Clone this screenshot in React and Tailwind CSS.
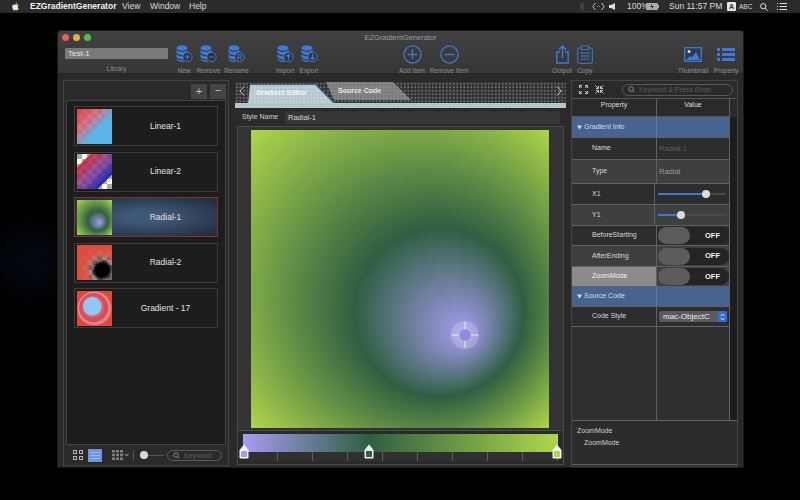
import { FaApple } from "react-icons/fa";

const font = "font-['Liberation_Sans',Arial,sans-serif]";
const blue = "#3f7ad9";

function Db({ badge }) {
  return (
    <svg width="17" height="18" viewBox="0 0 17 18">
      <g fill={blue}>
        <ellipse cx="6" cy="3" rx="5.5" ry="2.8" />
        <path d="M.5 4.6c1 1.6 3 2.3 5.5 2.3s4.500-.7 5.500-2.300v3c-1 1.600-3 2.300-5.500 2.300S1.500 9.200.5 7.600z" />
        <path d="M.5 9c1 1.600 3 2.300 5.500 2.300.5 0 1 0 1.500-.1v3c-.5.100-1 .100-1.500.100-2.500 0-4.500-.7-5.500-2.300z" />
        <path d="M.5 13.200c1 1.600 3 2.300 5.500 2.300.5 0 1 0 1.500-.1v1.300c-.5.100-1 .200-1.500.200-2.500 0-4.500-.8-5.500-2.300z" />
      </g>
      <circle cx="11.500" cy="12" r="4.700" fill="#333" stroke={blue} strokeWidth="1" />
      {badge === "plus" && <path d="M9 12h5M11.500 9.500v5" stroke={blue} strokeWidth="1" />}
      {badge === "minus" && <path d="M9 12h5" stroke={blue} strokeWidth="1" />}
      {badge === "r" && <path d="M10 15V9.500h2a1.500 1.500 0 0 1 0 3h-2M12 12.500l1.500 2.500" stroke={blue} strokeWidth="1" fill="none" />}
      {badge === "up" && <path d="M11.500 15V9.500M9.500 11.500l2-2 2 2" stroke={blue} strokeWidth="1.200" fill="none" />}
      {badge === "down" && <path d="M11.500 9v5.500M9.500 12.500l2 2 2-2" stroke={blue} strokeWidth="1.200" fill="none" />}
    </svg>
  );
}

function Circle({ plus }) {
  return (
    <svg width="19" height="19" viewBox="0 0 19 19" fill="none" stroke={blue} strokeWidth="1.300">
      <circle cx="9.500" cy="9.500" r="8.600" />
      <path d="M4.500 9.500h10" />
      {plus && <path d="M9.500 4.500v10" />}
    </svg>
  );
}

function OutputIcon() {
  return (
    <svg width="13" height="19" viewBox="0 0 13 19" fill="none" stroke={blue} strokeWidth="1.400">
      <path d="M4 7H.8v11h11.400V7H9" />
      <path d="M6.500 13V1M2.800 4.700 6.500 1l3.700 3.700" />
    </svg>
  );
}

function CopyIcon() {
  return (
    <svg width="16" height="19" viewBox="0 0 16 19" fill="none" stroke={blue} strokeWidth="1">
      <rect x=".7" y="3" width="14.600" height="15.300" rx="1.500" />
      <rect x="4.500" y="1" width="7" height="3.500" fill="#333" />
      <path d="M3.500 8h9M3.500 11h9M3.500 14h9" />
    </svg>
  );
}

function ThumbIcon() {
  return (
    <svg width="18" height="15" viewBox="0 0 18 15">
      <rect x=".7" y=".7" width="16.600" height="13.600" fill="#2d3a52" stroke={blue} strokeWidth="1.300" />
      <circle cx="5" cy="4.500" r="1.500" fill="#dfe8f7" />
      <path d="M2 13l4-4 2 1.500L12 5l4 8z" fill={blue} />
    </svg>
  );
}

function PropIcon() {
  return (
    <svg width="18" height="15" viewBox="0 0 18 15" fill={blue}>
      <rect x="0" y="1" width="3" height="3" />
      <rect x="5" y="1" width="13" height="3" />
      <rect x="0" y="6" width="3" height="3" />
      <rect x="5" y="6" width="13" height="3" />
      <rect x="0" y="11" width="3" height="3" />
      <rect x="5" y="11" width="13" height="3" />
    </svg>
  );
}

function Tool({ label, width, children }) {
  return (
    <div className={`flex flex-col items-center shrink-0 ${width}`}>
      <div className="h-[20px] flex items-center justify-center">{children}</div>
      <span className="mt-[3px] text-[6.500px] leading-[8px] text-[#8d8d8d] whitespace-nowrap">{label}</span>
    </div>
  );
}

function MenuBar() {
  return (
    <div className="h-[13px] bg-[#2b2b2b] flex items-center text-[8.500px] text-[#dcdcdc] shrink-0">
      <FaApple className="ml-[11px] text-[9px] text-[#e8e8e8]" />
      <span className="ml-[10px] font-bold text-[#f0f0f0] w-[92px]">EZGradientGenerator</span>
      <span className="w-[28px]">View</span>
      <span className="w-[39px]">Window</span>
      <span className="w-[20px]">Help</span>
      <svg className="ml-[370px]" width="6" height="9" viewBox="0 0 6 9" fill="none" stroke="#555" strokeWidth=".8">
        <path d="M.5 2.500l5 4L3 8.500V.5l2.500 2-5 4" />
      </svg>
      <svg className="ml-[7px]" width="13" height="9" viewBox="0 0 13 9" fill="none" stroke="#ccc" strokeWidth=".9">
        <path d="M3.500 1 .8 4.500 3.500 8M9.500 1l2.700 3.500L9.500 8" />
        <path d="M5 4.500h.8M7 4.500h.8" />
      </svg>
      <svg className="ml-[4px]" width="6" height="7" viewBox="0 0 6 7" fill="#ddd">
        <path d="M0 2h2l4-2v7L2 5H0z" />
      </svg>
      <span className="ml-[12px] w-[19px]">100%</span>
      <svg width="13" height="7" viewBox="0 0 13 7">
        <rect width="12" height="7" rx="1" fill="#aaa" />
        <rect x="12" y="2" width="1" height="3" fill="#aaa" />
        <path d="M6 1 4 4h2v2l2-3H6z" fill="#333" />
      </svg>
      <span className="ml-[10px] w-[58px]">Sun 11:57 PM</span>
      <span className="w-[9px] h-[9px] bg-[#e4e4e4] text-[#333] text-[7px] font-bold leading-[9px] text-center rounded-[1px]">A</span>
      <span className="ml-[3px] text-[6.500px] w-[21px]">ABC</span>
      <svg width="8" height="8" viewBox="0 0 8 8" fill="none" stroke="#ddd" strokeWidth="1">
        <circle cx="3.200" cy="3.200" r="2.600" />
        <path d="M5 5l2.700 2.700" />
      </svg>
      <svg className="ml-[9px]" width="10" height="7" viewBox="0 0 10 7" stroke="#ddd" strokeWidth="1">
        <path d="M0 .5h1M2.500 .5H10M0 3.500h1M2.500 3.500H10M0 6.500h1M2.500 6.500H10" />
      </svg>
    </div>
  );
}

function Toolbar() {
  return (
    <div className="h-[43px] shrink-0 rounded-t-[3px] bg-gradient-to-b from-[#414141] to-[#363636] border-b border-[#262626]">
      <div className="h-[13px] relative flex items-center justify-center">
        <div className="absolute left-[4px] top-[3px] flex gap-[4px]">
          <span className="w-[7px] h-[7px] rounded-full bg-[#ec5f57]" />
          <span className="w-[7px] h-[7px] rounded-full bg-[#e3b23e]" />
          <span className="w-[7px] h-[7px] rounded-full bg-[#5dbb4e]" />
        </div>
        <span className="text-[7.500px] text-[#9c9c9c]">EZGradientGenerator</span>
      </div>
      <div className="flex">
        <div className="ml-[7px] w-[103px] flex flex-col">
          <div className="mt-[4px] h-[11px] bg-[#7a7a7a] rounded-[1px] px-[3px] text-[8px] leading-[11px] text-[#e4e4e4]">Test-1</div>
          <span className="mt-[6px] text-center text-[6.500px] leading-[8px] text-[#8d8d8d]">Library</span>
        </div>
        <Tool label="New" width="ml-[4px] w-[24px]"><Db badge="plus" /></Tool>
        <Tool label="Remove" width="w-[25px]"><Db badge="minus" /></Tool>
        <Tool label="Rename" width="w-[31px]"><Db badge="r" /></Tool>
        <Tool label="Import" width="ml-[21px] w-[24px]"><Db badge="up" /></Tool>
        <Tool label="Export" width="w-[24px]"><Db badge="down" /></Tool>
        <Tool label="Add Item" width="ml-[73px] w-[36px]"><Circle plus /></Tool>
        <Tool label="Remove Item" width="w-[38px]"><Circle /></Tool>
        <Tool label="Output" width="ml-[82px] w-[24px]"><OutputIcon /></Tool>
        <Tool label="Copy" width="w-[22px]"><CopyIcon /></Tool>
        <Tool label="Thumbnail" width="ml-[79px] w-[36px]"><ThumbIcon /></Tool>
        <Tool label="Property" width="w-[30px]"><PropIcon /></Tool>
      </div>
    </div>
  );
}

// checkerboard + gradient overlays for the list thumbnails
function Thumb({ id }) {
  const checks = [];
  for (let y = 0; y < 7; y++) {
    for (let x = 0; x < 7; x++) {
      if ((x + y) % 2 === 0) checks.push(<rect key={x + "-" + y} x={x * 5} y={y * 5} width="5" height="5" fill="#a8a8a8" />);
    }
  }
  return (
    <svg width="35" height="35" viewBox="0 0 35 35" className="shrink-0">
      <defs>
        <linearGradient id="th1" x1="0" y1="0" x2="1" y2="1">
          <stop offset="0.05" stopColor="#e0403a" stopOpacity="0.95" />
          <stop offset="0.35" stopColor="#d0607a" stopOpacity="0.82" />
          <stop offset="0.6" stopColor="#56b6ea" stopOpacity="1" />
          <stop offset="1" stopColor="#56b6ea" />
        </linearGradient>
        <linearGradient id="th2" x1="0" y1="0" x2="1" y2="1">
          <stop offset="0.19" stopColor="#ffffff" stopOpacity="0" />
          <stop offset="0.2" stopColor="#cf3030" stopOpacity="0.95" />
          <stop offset="0.5" stopColor="#7d2f90" stopOpacity="0.8" />
          <stop offset="0.79" stopColor="#1a2cb0" />
          <stop offset="0.8" stopColor="#ffffff" stopOpacity="0" />
        </linearGradient>
        <radialGradient id="th3" cx="0.5" cy="0.5" r="0.7" fx="0.65" fy="0.66">
          <stop offset="0" stopColor="#a79cf2" />
          <stop offset="0.4" stopColor="#2f5f42" />
          <stop offset="1" stopColor="#aed64a" />
        </radialGradient>
        <radialGradient id="th4" cx="0.72" cy="0.72" r="0.75">
          <stop offset="0.25" stopColor="#000" />
          <stop offset="0.3" stopColor="#000" stopOpacity="0.85" />
          <stop offset="0.42" stopColor="#552a25" stopOpacity="0.55" />
          <stop offset="0.6" stopColor="#d9483a" stopOpacity="0.85" />
          <stop offset="0.85" stopColor="#dc4a3a" stopOpacity="0.97" />
        </radialGradient>
        <radialGradient id="th5" cx="0.5" cy="0.5" r="0.5" fx="0.37" fy="0.37">
          <stop offset="0.5" stopColor="#8fc8f5" />
          <stop offset="0.53" stopColor="#c08098" />
          <stop offset="0.65" stopColor="#e0485a" />
          <stop offset="0.8" stopColor="#e0485a" />
          <stop offset="0.86" stopColor="#e58a8a" />
          <stop offset="0.92" stopColor="#e58a8a" />
          <stop offset="1" stopColor="#e0483e" />
        </radialGradient>
      </defs>
      <rect width="35" height="35" fill="#fff" />
      {checks}
      <rect width="35" height="35" fill={`url(#th${id})`} />
    </svg>
  );
}

const items = [
  { name: "Linear-1", thumb: 1 },
  { name: "Linear-2", thumb: 2 },
  { name: "Radial-1", thumb: 3, active: true },
  { name: "Radial-2", thumb: 4 },
  { name: "Gradient - 17", thumb: 5 },
];

function LeftPanel() {
  return (
    <div className="ml-[5px] w-[166px] h-[386px] border border-[#444] px-[2px] flex flex-col shrink-0">
      <div className="h-[19px] pt-[3px] flex justify-end gap-[3px] shrink-0">
        <div className="w-[16px] h-[15px] bg-[#444] text-[#c4c4c4] text-[11px] leading-[14px] text-center">+</div>
        <div className="w-[16px] h-[15px] bg-[#444] text-[#c4c4c4] text-[11px] leading-[13px] text-center">−</div>
      </div>
      <div className="h-[345px] bg-[#1d1d1d] border border-[#444] px-[7px] pt-[5px] flex flex-col gap-[5.500px] shrink-0">
        {items.map((it) => (
          <div
            key={it.name}
            className={
              "h-[40px] shrink-0 flex items-center px-[2px] border " +
              (it.active
                ? "border-[#8a302a] bg-[radial-gradient(ellipse_at_center,#3f5878_20%,#1f2836_100%)]"
                : "border-[#3b3b3b]")
            }
          >
            <Thumb id={it.thumb} />
            <span className="flex-1 pl-[4px] text-center text-[8.500px] text-[#e2e2e2]">{it.name}</span>
          </div>
        ))}
      </div>
      <div className="flex-1 flex items-center pl-[7px]">
        <svg width="10" height="10" viewBox="0 0 10 10" fill="none" stroke="#b5b5b5" strokeWidth="1">
          <rect x=".5" y=".5" width="3" height="3" />
          <rect x="6.500" y=".5" width="3" height="3" />
          <rect x=".5" y="6.500" width="3" height="3" />
          <rect x="6.500" y="6.500" width="3" height="3" />
        </svg>
        <div className="ml-[5px] w-[14px] h-[13px] bg-[#6f97de] flex flex-col justify-center gap-[2px] px-[2px]">
          <span className="h-px bg-[#9db9ea]" />
          <span className="h-px bg-[#9db9ea]" />
          <span className="h-px bg-[#9db9ea]" />
        </div>
        <svg className="ml-[10px]" width="11" height="10" viewBox="0 0 11 10" fill="#7f7f7f">
          <rect width="3" height="2.500" />
          <rect x="4" width="3" height="2.500" />
          <rect x="8" width="3" height="2.500" />
          <rect y="3.700" width="3" height="2.500" />
          <rect x="4" y="3.700" width="3" height="2.500" />
          <rect x="8" y="3.700" width="3" height="2.500" />
          <rect y="7.500" width="3" height="2.500" />
          <rect x="4" y="7.500" width="3" height="2.500" />
          <rect x="8" y="7.500" width="3" height="2.500" />
        </svg>
        <svg className="ml-[1px]" width="5" height="4" viewBox="0 0 5 4" fill="none" stroke="#bbb" strokeWidth="1">
          <path d="M.5 .8l2 2 2-2" />
        </svg>
        <span className="ml-[4px] w-px h-[11px] bg-[#555]" />
        <div className="ml-[6px] w-[8px] h-[8px] rounded-full bg-[#d8d8d8] shrink-0" />
        <span className="w-[16px] h-px bg-[#555]" />
        <div className="ml-[3px] w-[55px] h-[11px] rounded-full border border-[#5a5a5a] flex items-center pl-[5px] shrink-0">
          <svg width="9" height="7" viewBox="0 0 9 7" fill="none" stroke="#9a9a9a" strokeWidth=".8">
            <circle cx="3" cy="3" r="2.300" />
            <path d="M4.800 4.800 6.500 6.500" />
          </svg>
          <span className="ml-[2px] text-[7px] leading-none text-[#5f5f5f]">Keyword</span>
        </div>
      </div>
    </div>
  );
}

const dots = "bg-[radial-gradient(#6e6e6e_1px,transparent_1px)] bg-[length:3.500px_3.500px]";

function Chevron({ d, className }) {
  return (
    <svg className={"absolute top-[4px] " + className} width="6" height="10" viewBox="0 0 6 10" fill="none" stroke="#c2c2c2" strokeWidth="1">
      <path d={d} />
    </svg>
  );
}

function Tabs() {
  return (
    <div className={`mt-[2px] h-[26px] shrink-0 bg-[#333] ${dots} relative flex flex-col justify-end`}>
      <div className="h-[21px] relative flex items-end">
        <Chevron d="M5 .5 1 5l4 4.500" className="left-[4px]" />
        <Chevron d="M1 .5 5 5 1 9.500" className="right-[4px]" />
        <div className="ml-[91px] mb-[3px] w-[85px] h-[18px] bg-[#7d7d7d] bg-[radial-gradient(#8d8d8d_1px,transparent_1px)] bg-[length:3.500px_3.500px] [clip-path:polygon(0_0,67px_0,85px_100%,8px_100%)] flex items-center pl-[12px] text-[7px] font-bold text-[#e8e8e8]">
          Source Code
        </div>
      </div>
      <div className="absolute left-[13px] top-[2px] w-[87px] h-[19px] bg-[#4c6390] [clip-path:polygon(2px_0,68px_0,87px_100%,0_100%)]">
        <div className="w-[86px] h-[19px] bg-[#bed0d5] bg-[radial-gradient(#a9bdc4_1px,transparent_1px)] bg-[length:3.500px_3.500px] [clip-path:polygon(2px_1px,67px_1px,85px_100%,0_100%)] flex items-center pl-[8px] text-[7px] font-bold text-[#f5f8f8]">
          Gradient Editor
        </div>
      </div>
      <div className="h-[5px] bg-[#b8cbcf] bg-[radial-gradient(#a6bac0_1px,transparent_1px)] bg-[length:3.500px_3.500px] shrink-0" />
    </div>
  );
}

function Canvas() {
  return (
    <div className="mx-[2px] h-[305px] border border-[#4a4a4a] bg-[#333] flex pl-[13px] pt-[3px] shrink-0">
      <div className="relative w-[298px] h-[298px]">
        <svg width="298" height="298" viewBox="0 0 298 298">
          <defs>
            <radialGradient id="main" gradientUnits="userSpaceOnUse" cx="149" cy="149" r="211" fx="214" fy="205">
              <stop offset="0" stopColor="#a79cf2" />
              <stop offset="0.4" stopColor="#2f5f42" />
              <stop offset="1" stopColor="#afd74a" />
            </radialGradient>
          </defs>
          <rect width="298" height="298" fill="url(#main)" />
        </svg>
        {/* focus handle */}
        <svg className="absolute left-[200px] top-[191px]" width="28" height="28" viewBox="0 0 28 28">
          <circle cx="14" cy="14" r="14" fill="#fff" fillOpacity=".2" />
          <circle cx="14" cy="14" r="5.500" fill="#9388e0" />
          <path d="M14 1v7M14 20v7M1 14h7M20 14h7" stroke="#eeeeee" strokeWidth="1" />
        </svg>
      </div>
    </div>
  );
}

function Handle({ color, className }) {
  return (
    <svg className={"absolute top-[13px] " + className} width="10" height="15" viewBox="0 0 10 15">
      <path d="M5 .5 9.500 6v7.500a1 1 0 0 1-1 1h-7a1 1 0 0 1-1-1V6z" fill="#f2f2f2" />
      <rect x="2" y="7" width="6" height="6" fill={color} />
    </svg>
  );
}

function GradientStrip() {
  return (
    <div className="mx-[2px] h-[34px] border border-t-0 border-[#4a4a4a] px-[5px] pt-[3px] relative shrink-0">
      <div className="h-[18px] bg-[linear-gradient(to_right,#a79cf2_0%,#2f5f42_40%,#afd74a_100%)]" />
      <div className="h-[9px] bg-[repeating-linear-gradient(to_right,#303030_0,#303030_34px,#5c5c5c_34px,#5c5c5c_35px)] bg-[#303030]" />
      <Handle color="#a79cf2" className="left-[1px]" />
      <Handle color="#2f5f42" className="left-[126px]" />
      <Handle color="#afd74a" className="left-[314px]" />
    </div>
  );
}

function CenterPanel() {
  return (
    <div className="ml-[6px] w-[331px] flex flex-col shrink-0">
      <Tabs />
      <div className="h-[18px] flex items-center shrink-0">
        <span className="ml-[7px] w-[43px] text-[7px] text-[#cfcfcf]">Style Name</span>
        <div className="w-[275px] h-[13px] bg-[#363636] pl-[3px] text-[7.500px] leading-[13px] text-[#d5d5d5]">Radial-1</div>
      </div>
      <Canvas />
      <GradientStrip />
    </div>
  );
}

function Slider({ pct }) {
  return (
    <div className="mx-[3px] w-[68px] h-[2px] bg-[#4a4a4a] relative">
      <div className="h-[2px] bg-[#3f78d0]" style={{ width: pct + "%" }} />
      <div className="absolute top-[-3px] w-[8px] h-[8px] rounded-full bg-[#dcdcdc] -translate-x-1/2" style={{ left: pct + "%" }} />
    </div>
  );
}

function Switch() {
  return (
    <div className="ml-[1px] w-[71px] h-[17px] rounded-full bg-[#242424] flex items-center">
      <div className="w-[32px] h-[17px] rounded-full bg-[#5c5c5c]" />
      <span className="ml-[15px] text-[7.500px] font-bold text-[#f0f0f0]">OFF</span>
    </div>
  );
}

function Row({ h, label, bg = "bg-[#2d2d2d]", labelBg = "", children }) {
  return (
    <div className={`${h} ${bg} flex border-b border-[#616161] shrink-0`}>
      <div className={`w-[84px] pl-[20px] flex items-center text-[7px] text-[#d8d8d8] ${labelBg}`}>{label}</div>
      <div className="w-px bg-[#616161]" />
      <div className="flex-1 flex items-center">{children}</div>
    </div>
  );
}

function Section({ h, label }) {
  return (
    <div className={`${h} bg-[#46648f] flex border-b border-[#616161] shrink-0`}>
      <div className="w-[84px] pl-[5px] flex items-center text-[7px] text-[#d5deea]">
        <svg className="mr-[2px]" width="5" height="5" viewBox="0 0 5 5" fill="#d5deea">
          <path d="M0 .5h5L2.500 4.500z" />
        </svg>
        {label}
      </div>
      <div className="w-px bg-[#5f7aa1]" />
    </div>
  );
}

function RightPanel() {
  const lighter = "bg-[#3f3f3f]";
  return (
    <div className="ml-[5px] w-[167px] h-[387px] border border-[#444] flex flex-col shrink-0">
      <div className="h-[17px] flex items-center shrink-0">
        <svg className="ml-[7px]" width="9" height="9" viewBox="0 0 9 9" fill="none" stroke="#c4c4c4" strokeWidth="1">
          <path d="M.5 3V.5H3M6 .5h2.500V3M.5 6v2.500H3M6 8.500h2.500V6M1 1l2 2M8 1 6 3M1 8l2-2M8 8 6 6" />
        </svg>
        <svg className="ml-[7px]" width="9" height="9" viewBox="0 0 9 9" fill="none" stroke="#c4c4c4" strokeWidth="1">
          <path d="M3.500 1v2.500H1M5.500 1v2.500H8M3.500 8V5.500H1M5.500 8V5.500H8M.5 .5l3 3M8.500 .5l-3 3M.5 8.500l3-3M8.500 8.500l-3-3" />
        </svg>
        <div className="ml-[18px] w-[111px] h-[12px] rounded-full border border-[#585858] flex items-center pl-[5px]">
          <svg width="9" height="7" viewBox="0 0 9 7" fill="none" stroke="#a0a0a0" strokeWidth=".8">
            <circle cx="3" cy="3" r="2.300" />
            <path d="M4.800 4.800 6.500 6.500" />
          </svg>
          <span className="ml-[2px] text-[7px] leading-none text-[#5c5c5c]">Keyword &amp; Press Enter</span>
        </div>
      </div>
      <div className="flex-1 flex min-h-0">
        <div className="w-[157px] flex flex-col bg-[#2f2f2f]">
          <div className="h-[19px] flex border-t border-b border-[#555] bg-[#2a2a2a] text-[7px] text-[#dedede] shrink-0">
            <div className="w-[84px] text-center leading-[12px]">Property</div>
            <div className="w-px bg-[#616161]" />
            <div className="flex-1 text-center leading-[12px]">Value</div>
          </div>
          <Section h="h-[21px]" label="Gradient Info" />
          <Row h="h-[22px]" label="Name">
            <span className="ml-[2px] text-[7.500px] text-[#5e5e5e]">Radial-1</span>
          </Row>
          <Row h="h-[24px]" label="Type" bg={lighter}>
            <span className="ml-[2px] text-[7.500px] text-[#9a9a9a]">Radial</span>
          </Row>
          <Row h="h-[21px]" label="X1"><Slider pct={70} /></Row>
          <Row h="h-[21px]" label="Y1" bg={lighter}><Slider pct={34} /></Row>
          <Row h="h-[20px]" label="BeforeStarting"><Switch /></Row>
          <Row h="h-[21px]" label="AfterEnding" bg={lighter}><Switch /></Row>
          <Row h="h-[20px]" label="ZoomMode" bg={lighter} labelBg="bg-[#8b8b8b] text-[#f2f2f2]"><Switch /></Row>
          <Section h="h-[20px]" label="Source Code" />
          <Row h="h-[20px]" label="Code Style">
            <div className="ml-[2px] w-[68px] h-[11px] rounded-[2px] bg-[#5a5a5a] flex items-center text-[8px] text-[#ececec] overflow-hidden">
              <span className="ml-[4px] flex-1">mac-ObjectC</span>
              <span className="w-[9px] h-[11px] bg-[#2f6fdc] flex items-center justify-center">
                <svg width="5" height="8" viewBox="0 0 5 8" fill="none" stroke="#fff" strokeWidth=".8">
                  <path d="M.7 3 2.500 1l1.800 2M.7 5l1.800 2 1.800-2" />
                </svg>
              </span>
            </div>
          </Row>
          <div className="flex-1 flex min-h-0">
            <div className="w-[84px]" />
            <div className="w-px bg-[#616161]" />
          </div>
        </div>
        <div className="w-[1px] bg-[#616161]" />
        <div className="flex-1 flex flex-col">
          <div className="h-[19px] bg-[#2a2a2a] border-t border-[#555]" />
          <div className="flex-1 bg-[#1d1d1d]" />
        </div>
      </div>
      <div className="h-[45px] shrink-0 border-t border-b border-[#616161] bg-[#2c2c2c] pl-[5px] pt-[4px] mb-[1px] text-[7px] text-[#cfcfcf]">
        <div className="leading-[12px]">ZoomMode</div>
        <div className="leading-[12px] ml-[7px]">ZoomMode</div>
      </div>
    </div>
  );
}

export default function App() {
  return (
    <div className={`w-[800px] h-[500px] overflow-hidden bg-black bg-[radial-gradient(circle_at_30px_260px,#030812_0,#000_50px)] flex flex-col ${font}`}>
      <MenuBar />
      <div className="mt-[18px] ml-[58px] w-[685px] h-[436px] rounded-t-[3px] bg-[#2a2a2a] flex flex-col shadow-[0_0_0_1px_#1a1a1a]">
        <Toolbar />
        <div className="pt-[6px] flex">
          <LeftPanel />
          <CenterPanel />
          <RightPanel />
        </div>
      </div>
    </div>
  );
}
